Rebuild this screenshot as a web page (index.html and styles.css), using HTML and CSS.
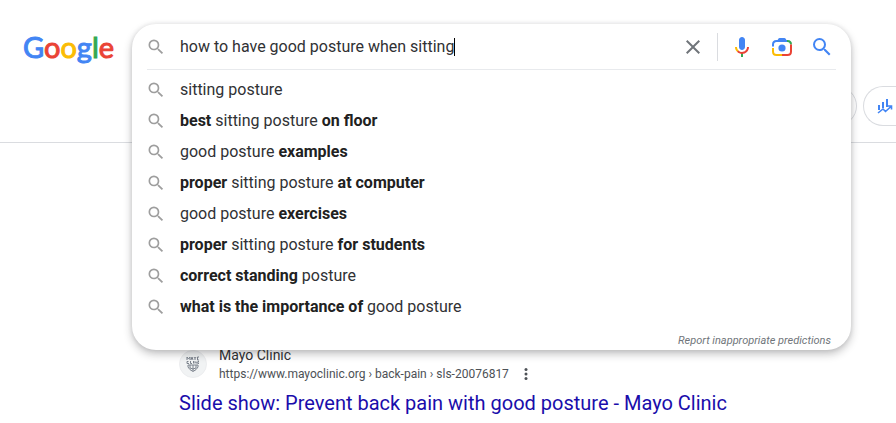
FILE: index.html
```html
<!DOCTYPE html>
<html lang="en">
<head>
    <meta charset="UTF-8">
    <meta name="viewport" content="width=device-width, initial-scale=1.0">
    <title>Google Search</title>
    <link rel="stylesheet" href="styles.css">
</head>
<body>
<!-- shared magnifier icon -->
<svg class="sprite" aria-hidden="true">
    <symbol id="magnifier" viewBox="0 0 24 24">
        <path d="M15.5 14h-.79l-.28-.27A6.471 6.471 0 0 0 16 9.5 6.5 6.5 0 1 0 9.5 16c1.61 0 3.09-.59 4.23-1.57l.27.28v.79l5 4.99L20.49 19l-4.99-5zm-6 0C7.01 14 5 11.99 5 9.5S7.01 5 9.5 5 14 7.01 14 9.5 11.99 14 9.5 14z"/>
    </symbol>
</svg>

<header>
    <div class="top">
        <a class="logo" href="#"><span class="blue">G</span><span class="red">o</span><span class="yellow">o</span><span class="blue">g</span><span class="green">l</span><span class="red">e</span></a>
        <form class="search" role="search">
            <div class="search-panel">
                <div class="search-row">
                    <svg class="icon-small"><use href="#magnifier"/></svg>
                    <label class="query">
                        <input type="text" name="q" aria-label="Search" autocomplete="off" value="how to have good posture when sitting">
                        <span class="caret"></span>
                    </label>
                    <button class="icon-btn clear" type="reset" aria-label="Clear">
                        <svg viewBox="0 0 24 24" fill="#70757a"><path d="M19 6.41L17.59 5 12 10.59 6.41 5 5 6.41 10.59 12 5 17.59 6.41 19 12 13.41 17.59 19 19 17.59 13.41 12z"/></svg>
                    </button>
                    <span class="sep"></span>
                    <div class="tools">
                        <button class="icon-btn" type="button" aria-label="Search by voice">
                            <svg viewBox="0 0 24 24">
                                <path fill="#4285f4" d="M12 15c1.66 0 3-1.31 3-2.97V5.01C15 3.35 13.66 2 12 2S9 3.34 9 5.01v7.02C9 13.69 10.34 15 12 15z"/>
                                <path fill="#34a853" d="M11 18.08h2V22h-2z"/>
                                <path fill="#fbbc04" d="M7.05 16.87C5.78 15.54 5 14.04 5 12h2c0 1.45.56 2.42 1.47 3.38v.32l-1.15 1.18z"/>
                                <path fill="#ea4335" d="M12 16.93a4.97 5.25 0 0 1-3.54-1.55l-1.41 1.49C8.31 18.21 10.07 19 12 19c3.87 0 6.99-2.92 6.99-7H17c0 2.92-2.24 4.93-5 4.93z"/>
                            </svg>
                        </button>
                        <button class="icon-btn" type="button" aria-label="Search by image">
                            <svg viewBox="0 0 24 24" fill="none" stroke-width="2">
                                <path fill="#4285f4" d="M7 6l1.500-2.500Q9 3 9.500 3h5q.5 0 1 .5L17 6z"/>
                                <path stroke="#4285f4" d="M3 11.500V9.500Q3 6 6.500 6H17"/>
                                <path stroke="#34a853" d="M17 6h.5Q21 6 21 9.500"/>
                                <path stroke="#ea4335" d="M21 9.500v7Q21 20 17.500 20H12"/>
                                <path stroke="#fbbc04" d="M3 13v3.500Q3 20 6.500 20H12"/>
                                <circle cx="12" cy="13" r="3.600" fill="#4285f4"/>
                            </svg>
                        </button>
                        <button class="icon-btn" type="submit" aria-label="Google Search">
                            <svg fill="#4285f4"><use href="#magnifier"/></svg>
                        </button>
                    </div>
                </div>
                <ul class="suggestions">
                    <li><svg class="icon-small"><use href="#magnifier"/></svg><span>sitting posture</span></li>
                    <li><svg class="icon-small"><use href="#magnifier"/></svg><span><b>best</b> sitting posture <b>on floor</b></span></li>
                    <li><svg class="icon-small"><use href="#magnifier"/></svg><span>good posture <b>examples</b></span></li>
                    <li><svg class="icon-small"><use href="#magnifier"/></svg><span><b>proper</b> sitting posture <b>at computer</b></span></li>
                    <li><svg class="icon-small"><use href="#magnifier"/></svg><span>good posture <b>exercises</b></span></li>
                    <li><svg class="icon-small"><use href="#magnifier"/></svg><span><b>proper</b> sitting posture <b>for students</b></span></li>
                    <li><svg class="icon-small"><use href="#magnifier"/></svg><span><b>correct standing</b> posture</span></li>
                    <li><svg class="icon-small"><use href="#magnifier"/></svg><span><b>what is the importance of</b> good posture</span></li>
                </ul>
                <a class="report" href="#">Report inappropriate predictions</a>
            </div>
        </form>
    </div>
    <div class="chips">
        <span class="chip"></span>
        <button class="chip chip-last" type="button" aria-label="Trends">
            <svg viewBox="0 0 16 16" fill="none" stroke="#4285f4">
                <path stroke-width="2" d="M2 7v5M6 4v6M10 1v8"/>
                <path stroke-width="1.600" d="M1 15l5-4 2.500 2.500L14 8.500M11 8h3.500v3.500"/>
            </svg>
        </button>
    </div>
</header>

<main>
    <article class="result">
        <div class="source">
            <span class="favicon">
                <svg viewBox="0 0 14 16" fill="none" stroke="#7b828c">
                    <path d="M1 4V1l1.500 2L4 1v3M5 4l1-3 1 3M8 1l1 1.500V4M10 1L9 2.500M13 1h-1.500v3H13M2.500 5.500H1v2h2M4.500 5v2.500H6M7.500 5v2.500M9 7.500v-2l2 2v-2M13 5.500h-1v2h1"/>
                    <path d="M2 9h10v2q-1.500 3-5 4.500Q3.500 14 2 11zM4 9v3l3 1 3-1V9M7 9v6"/>
                </svg>
            </span>
            <div class="site">
                <span class="site-name">Mayo Clinic</span>
                <div class="url">
                    <cite>https://www.mayoclinic.org › back-pain › sls-20076817</cite>
                    <button class="more" type="button" aria-label="About this result">
                        <svg viewBox="0 0 4 12" fill="#4d5156"><circle cx="2" cy="1.500" r="1.500"/><circle cx="2" cy="6" r="1.500"/><circle cx="2" cy="10.500" r="1.500"/></svg>
                    </button>
                </div>
            </div>
        </div>
        <h3><a href="#">Slide show: Prevent back pain with good posture - Mayo Clinic</a></h3>
    </article>
</main>
</body>
</html>
```

FILE: styles.css
```css
*{
    box-sizing: border-box;
}
body{
    margin: 0;
    background: #fff;
    color: #303134;
    font-family: Roboto, Arial, sans-serif;
    font-size: 16px;
    overflow: hidden;
}
a{
    text-decoration: none;
}
b{
    color: #212121;
}
button{
    border: 0;
    padding: 0;
    background: none;
    cursor: pointer;
}
svg{
    display: block;
}
.sprite{
    display: none;
}

header{
    border-bottom: 1px solid #dadce0;
    padding-top: 24px;
}
.top{
    display: flex;
    height: 46px;
    padding: 0 45px 0 23px;
}
.logo{
    flex: 0 0 109px;
    font-family: Lato, sans-serif;
    font-size: 29px;
    line-height: 46px;
    -webkit-text-stroke: 1px currentColor;
}
.blue{ color: #4285f4; }
.red{ color: #ea4335; }
.yellow{ color: #fbbc05; }
.green{ color: #34a853; }
.logo span{
    -webkit-text-stroke-color: currentColor;
}

.search{
    flex: 1;
    position: relative;
}
.search-panel{
    position: absolute;
    top: 0;
    left: 0;
    right: 0;
    z-index: 1;
    display: flex;
    flex-direction: column;
    background: #fff;
    border-radius: 24px;
    box-shadow: 0 4px 8px 0 rgba(32,33,36,.28), 0 0 4px rgba(32,33,36,.1);
}
.search-row{
    display: flex;
    align-items: center;
    height: 45px;
    padding: 0 17px 0 14px;
}
.icon-small{
    flex: none;
    width: 20px;
    height: 20px;
    margin-right: 14px;
    fill: #9e9e9e;
}
.query{
    flex: 1;
    display: flex;
    align-items: center;
}
.query input{
    field-sizing: content;
    border: 0;
    outline: 0;
    padding: 0;
    background: none;
    color: #303134;
    caret-color: transparent;
    font: inherit;
}
.caret{
    width: 1px;
    height: 18px;
    background: #000;
}
.icon-btn{
    width: 24px;
    height: 24px;
}
.icon-btn svg{
    width: 24px;
    height: 24px;
}
.sep{
    width: 1px;
    height: 28px;
    margin: 0 12px;
    background: #dadce0;
}
.tools{
    display: flex;
    gap: 16px;
}

.suggestions{
    list-style: none;
    margin: 0 15px;
    padding: 4px 0 0;
    border-top: 1px solid #e8eaed;
}
.suggestions li{
    display: flex;
    align-items: center;
    height: 31px;
    margin-left: -1px;
}
.report{
    align-self: flex-end;
    padding: 11px 20px 1px;
    color: #70757a;
    font-size: 11px;
    font-style: italic;
    line-height: 16px;
}

.chips{
    display: grid;
    grid-template-columns: 1fr 33px;
    gap: 6px;
    padding: 16px 0 16px 180px;
}
.chip{
    height: 40px;
    border: 1px solid #dadce0;
    border-radius: 20px;
}
.chip-last{
    border-right: 0;
    border-radius: 20px 0 0 20px;
    padding-left: 13px;
}
.chip svg{
    width: 16px;
    height: 16px;
}

main{
    padding: 202px 45px 0 179px;
}
.source{
    display: flex;
    align-items: center;
    gap: 12px;
}
.favicon{
    display: flex;
    align-items: center;
    justify-content: center;
    width: 28px;
    height: 28px;
    border: 1px solid #ecedef;
    border-radius: 50%;
    background: #f1f3f4;
}
.favicon svg{
    width: 14px;
    height: 16px;
}
.site-name{
    display: block;
    font-size: 14px;
    line-height: 20px;
}
.url{
    display: flex;
    align-items: center;
    gap: 15px;
    color: #4d5156;
    font-size: 12px;
    line-height: 18px;
}
.url cite{
    font-style: normal;
}
.more svg{
    width: 4px;
    height: 12px;
}
h3{
    margin: 7px 0 0;
    font-size: 20px;
    font-weight: 400;
    line-height: 26px;
}
h3 a{
    color: #1a0dab;
}
```
